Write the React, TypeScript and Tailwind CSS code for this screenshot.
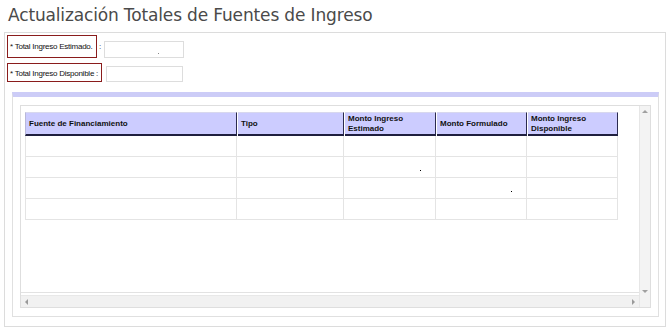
import React from "react";

const cols = [
  { w: "w-[212px]", label: ["Fuente de Financiamiento"] },
  { w: "w-[107px]", label: ["Tipo"] },
  { w: "w-[92px]", label: ["Monto Ingreso", "Estimado"] },
  { w: "w-[91px]", label: ["Monto Formulado"] },
  { w: "w-[91px]", label: ["Monto Ingreso", "Disponible"] },
];

export default function App() {
  const rows = [0, 1, 2, 3];
  return (
    <div className="w-[670px] h-[329px] bg-white overflow-hidden font-['Liberation_Sans',Arial,sans-serif]">
      <h1 className="pl-[8px] pt-[4px] h-[32px] text-[17px] leading-[22px] tracking-[-0.15px] text-[#4a4a4a] font-['DejaVu_Sans',sans-serif]">
        Actualización Totales de Fuentes de Ingreso
      </h1>
      <div className="ml-[4px] w-[662px] h-[295px] border border-[#dcdcdc] flex flex-col">
        {/* row 1 */}
        <div className="flex items-end pl-[2px] pt-[2px] h-[25px]">
          <div className="w-[90px] h-[23px] border border-[#8a1c1c] flex items-center pl-[2px] pt-[1px] text-[8px] tracking-[-0.25px] text-[#111] whitespace-nowrap">
            * Total Ingreso Estimado.
          </div>
          <span className="text-[8px] text-[#333] mx-[2px] mb-[5px]">:</span>
          <div className="relative w-[80px] h-[17px] border border-[#dddddd] ml-[1px]">
            <span className="absolute left-[53px] top-[11px] w-px h-px bg-[#888]" />
          </div>
        </div>
        {/* row 2 */}
        <div className="flex items-end pl-[2px] pt-[5px] h-[24px]">
          <div className="w-[95px] h-[19px] border border-[#8a1c1c] flex items-center pl-[2px] pt-[2px] text-[8px] tracking-[-0.25px] text-[#111] whitespace-nowrap">
            * Total Ingreso Disponible :
          </div>
          <div className="w-[77px] h-[16px] border border-[#dddddd] ml-[4px]" />
        </div>
        {/* container */}
        <div className="ml-[7px] mt-[10px] w-[647px] h-[225px] border-t-[5px] border-t-[#ccccf7] border-x border-b border-x-[#e0e0e0] border-b-[#e0e0e0] pl-[7px] pt-[8px]">
          <div className="w-[631px] h-[203px] border border-[#dedede] flex">
            <div className="flex-1 flex flex-col">
              <div className="flex-1 border-b border-[#e2e2e2] pl-[4px] pt-[6px]">
                {/* header */}
                <div className="flex">
                  {cols.map((c, i) => (
                    <div
                      key={i}
                      className={`${c.w} h-[24px] flex ${i === 0 ? "" : "border-l border-l-white"}`}
                    >
                      <div
                        className={`flex-1 bg-[#ccccff] border-t border-t-[#d8d8ee] border-r border-r-[#2b2b4f] border-b-2 border-b-[#1f1f3f] ${i === 0 ? "border-l border-l-[#b8b8d8]" : ""} flex flex-col justify-center pl-[3px] text-[8px] leading-[10px] font-bold text-[#111] whitespace-nowrap`}
                      >
                        {c.label.map((l, j) => (
                          <span key={j}>{l}</span>
                        ))}
                      </div>
                    </div>
                  ))}
                </div>
                {/* body */}
                {rows.map((r) => (
                  <div key={r} className="flex">
                    {cols.map((c, i) => (
                      <div
                        key={i}
                        className={`${c.w} h-[21px] relative border-r border-b border-[#e4e4e4] ${i === 0 ? "border-l" : ""}`}
                      >
                        {r === 1 && i === 2 && (
                          <span className="absolute left-[76px] top-[13px] w-px h-px bg-black" />
                        )}
                        {r === 2 && i === 3 && (
                          <span className="absolute left-[75px] top-[13px] w-px h-px bg-black" />
                        )}
                      </div>
                    ))}
                  </div>
                ))}
              </div>
              {/* horizontal scrollbar */}
              <div className="h-[12px] mt-[2px] bg-[#f1f1f1] border-t border-[#e8e8e8] flex items-center justify-between px-[4px]">
                <svg width="4" height="6" viewBox="0 0 4 6">
                  <path d="M3 0 L0 3 L3 6 Z" fill="#9a9a9a" />
                </svg>
                <svg width="4" height="6" viewBox="0 0 4 6">
                  <path d="M1 0 L4 3 L1 6 Z" fill="#9a9a9a" />
                </svg>
              </div>
            </div>
            {/* vertical scrollbar */}
            <div className="w-[11px] bg-[#f3f3f3] border-l border-[#e6e6e6] flex flex-col items-center justify-between pt-[4px] pb-[14px]">
              <svg width="6" height="4" viewBox="0 0 6 4">
                <path d="M0 3 L3 0 L6 3 Z" fill="#a0a0a0" />
              </svg>
              <svg width="6" height="4" viewBox="0 0 6 4">
                <path d="M0 1 L3 4 L6 1 Z" fill="#a0a0a0" />
              </svg>
            </div>
          </div>
        </div>
      </div>
    </div>
  );
}
